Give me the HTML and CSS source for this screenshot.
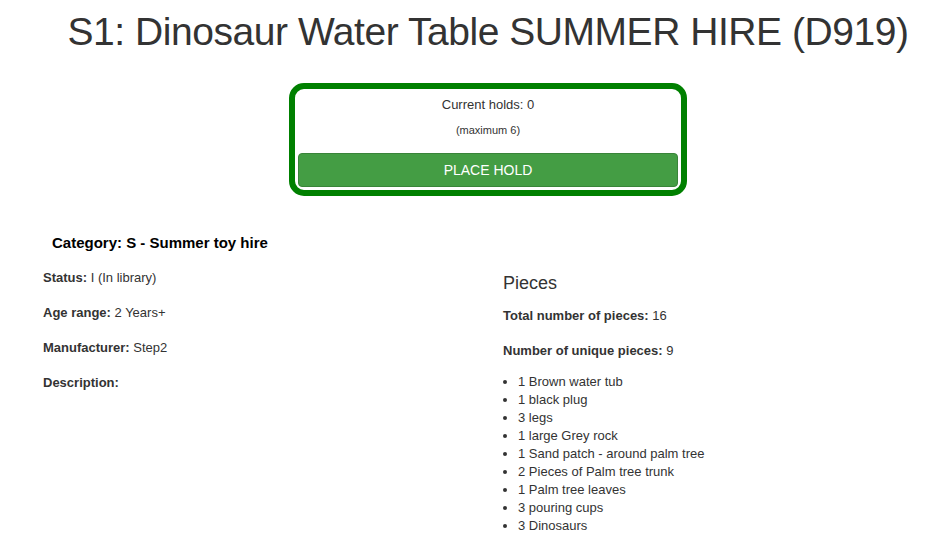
FILE: index.html
```html
<!DOCTYPE html>
<html lang="en">
<head>
<meta charset="utf-8">
<title>S1: Dinosaur Water Table SUMMER HIRE (D919)</title>
<link rel="stylesheet" href="styles.css">
</head>
<body>
<div class="page">
  <h1 class="title">S1: Dinosaur Water Table SUMMER HIRE (D919)</h1>
  <div class="hold-box">
    <p class="holds">Current holds: 0</p>
    <p class="max">(maximum 6)</p>
    <button class="btn-hold" type="button">PLACE HOLD</button>
  </div>
  <h4 class="category">Category: S - Summer toy hire</h4>
  <div class="columns">
    <div class="col">
      <p class="field"><b>Status:</b> I (In library)</p>
      <p class="field"><b>Age range:</b> 2 Years+</p>
      <p class="field"><b>Manufacturer:</b> Step2</p>
      <p class="field"><b>Description:</b></p>
    </div>
    <div class="col">
      <h3 class="pieces-title">Pieces</h3>
      <p class="field first"><b>Total number of pieces:</b> 16</p>
      <p class="field"><b>Number of unique pieces:</b> 9</p>
      <ul class="pieces">
        <li>1 Brown water tub</li>
        <li>1 black plug</li>
        <li>3 legs</li>
        <li>1 large Grey rock</li>
        <li>1 Sand patch - around palm tree</li>
        <li>2 Pieces of Palm tree trunk</li>
        <li>1 Palm tree leaves</li>
        <li>3 pouring cups</li>
        <li>3 Dinosaurs</li>
      </ul>
    </div>
  </div>
</div>
</body>
</html>
```

FILE: styles.css
```css
html, body {
  margin: 0;
  padding: 0;
  overflow: hidden;
  background: #fff;
}
body {
  font-family: "Liberation Sans", Arial, sans-serif;
  font-size: 13px;
  line-height: 18px;
  color: #333;
}
.page {
  width: 920px;
  margin-left: 28px;
}
.title {
  margin: 10px 0 0;
  font-size: 39px;
  line-height: 43px;
  font-weight: normal;
  text-align: center;
  letter-spacing: -0.45px;
  color: #333;
}
.hold-box {
  width: 380px;
  margin: 30px auto 0;
  border: 6px solid #008000;
  border-radius: 15px;
  padding: 3px;
  text-align: center;
}
.holds {
  margin: 4px 0 0;
  font-size: 13px;
  line-height: 18px;
}
.max {
  margin: 7px 0 0;
  font-size: 11px;
  line-height: 18px;
}
.btn-hold {
  display: block;
  width: 100%;
  height: 34px;
  margin-top: 14px;
  background: #449d44;
  border: 1px solid #398439;
  border-radius: 4px;
  color: #fff;
  font-family: "Liberation Sans", Arial, sans-serif;
  font-size: 14px;
  line-height: 20px;
  padding: 6px 12px;
}
.category {
  margin: 37px 0 0;
  padding-left: 24px;
  font-size: 15px;
  line-height: 20px;
  font-weight: bold;
  color: #000;
}
.columns {
  display: grid;
  grid-template-columns: 460px 460px;
  margin-top: 16px;
}
.col {
  padding: 0 15px;
}
.field {
  margin: 0 0 17px;
}
.field b {
  font-weight: bold;
}
.pieces-title {
  margin: 4px 0 0;
  font-size: 18px;
  line-height: 20px;
  font-weight: normal;
}
.field.first {
  margin-top: 14px;
}
.pieces {
  margin: -4px 0 0;
  padding-left: 15px;
}
.pieces li {
  line-height: 18px;
}
```
